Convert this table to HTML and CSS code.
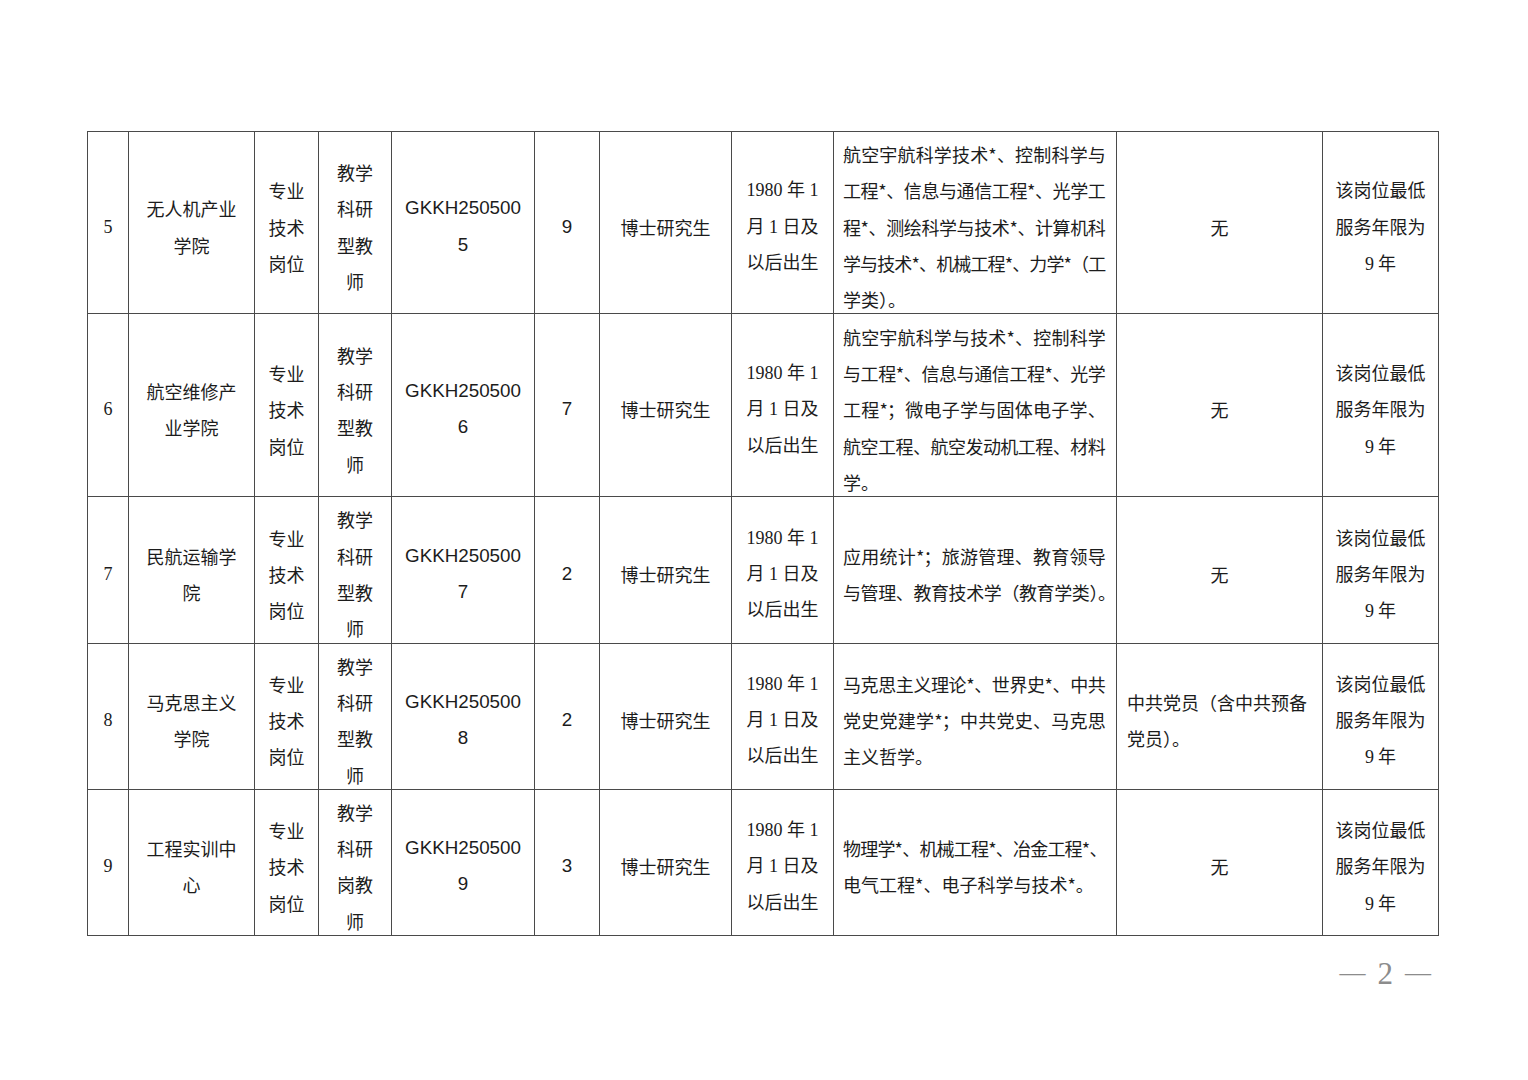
FILE: index.html
```html
<!DOCTYPE html>
<html lang="zh-CN">
<head>
<meta charset="utf-8">
<title>岗位表</title>
<link rel="stylesheet" href="styles.css">
</head>
<body>
<div class="page">
  <table class="grid">
    <colgroup>
      <col class="w1"><col class="w2"><col class="w3"><col class="w4"><col class="w5"><col class="w6"><col class="w7"><col class="w8"><col class="w9"><col class="w10"><col class="w11">
    </colgroup>
    <tr class="r5">
      <td class="serif"><div class="t">5</div></td>
      <td><div class="t"><span class="ln">无人机产业</span><span class="ln">学院</span></div></td>
      <td><div class="t"><span class="ln">专业</span><span class="ln">技术</span><span class="ln">岗位</span></div></td>
      <td><div class="t"><span class="ln">教学</span><span class="ln">科研</span><span class="ln">型教</span><span class="ln">师</span></div></td>
      <td class="arial"><div class="t"><span class="ln">GKKH250500</span><span class="ln">5</span></div></td>
      <td class="arial"><div class="t">9</div></td>
      <td><div class="t">博士研究生</div></td>
      <td class="serif"><div class="t"><span class="ln">1980 年 1</span><span class="ln">月 1 日及</span><span class="ln">以后出生</span></div></td>
      <td class="major"><div class="t"><span class="ln j">航空宇航科学技术*、控制科学与</span><span class="ln j">工程*、信息与通信工程*、光学工</span><span class="ln j">程*、测绘科学与技术*、计算机科</span><span class="ln j tight">学与技术*、机械工程*、力学*（工</span><span class="ln">学类）。</span></div></td>
      <td><div class="t">无</div></td>
      <td><div class="t"><span class="ln">该岗位最低</span><span class="ln">服务年限为</span><span class="ln"><span class="num">9</span> 年</span></div></td>
    </tr>
    <tr class="r6">
      <td class="serif"><div class="t">6</div></td>
      <td><div class="t"><span class="ln">航空维修产</span><span class="ln">业学院</span></div></td>
      <td><div class="t"><span class="ln">专业</span><span class="ln">技术</span><span class="ln">岗位</span></div></td>
      <td><div class="t"><span class="ln">教学</span><span class="ln">科研</span><span class="ln">型教</span><span class="ln">师</span></div></td>
      <td class="arial"><div class="t"><span class="ln">GKKH250500</span><span class="ln">6</span></div></td>
      <td class="arial"><div class="t">7</div></td>
      <td><div class="t">博士研究生</div></td>
      <td class="serif"><div class="t"><span class="ln">1980 年 1</span><span class="ln">月 1 日及</span><span class="ln">以后出生</span></div></td>
      <td class="major"><div class="t"><span class="ln j">航空宇航科学与技术*、控制科学</span><span class="ln j">与工程*、信息与通信工程*、光学</span><span class="ln j">工程*；微电子学与固体电子学、</span><span class="ln j">航空工程、航空发动机工程、材料</span><span class="ln">学。</span></div></td>
      <td><div class="t">无</div></td>
      <td><div class="t"><span class="ln">该岗位最低</span><span class="ln">服务年限为</span><span class="ln"><span class="num">9</span> 年</span></div></td>
    </tr>
    <tr class="r7">
      <td class="serif"><div class="t">7</div></td>
      <td><div class="t"><span class="ln">民航运输学</span><span class="ln">院</span></div></td>
      <td><div class="t"><span class="ln">专业</span><span class="ln">技术</span><span class="ln">岗位</span></div></td>
      <td><div class="t"><span class="ln">教学</span><span class="ln">科研</span><span class="ln">型教</span><span class="ln">师</span></div></td>
      <td class="arial"><div class="t"><span class="ln">GKKH250500</span><span class="ln">7</span></div></td>
      <td class="arial"><div class="t">2</div></td>
      <td><div class="t">博士研究生</div></td>
      <td class="serif"><div class="t"><span class="ln">1980 年 1</span><span class="ln">月 1 日及</span><span class="ln">以后出生</span></div></td>
      <td class="major"><div class="t"><span class="ln j">应用统计*；旅游管理、教育领导</span><span class="ln long">与管理、教育技术学（教育学类）。</span></div></td>
      <td><div class="t">无</div></td>
      <td><div class="t"><span class="ln">该岗位最低</span><span class="ln">服务年限为</span><span class="ln"><span class="num">9</span> 年</span></div></td>
    </tr>
    <tr class="r8">
      <td class="serif"><div class="t">8</div></td>
      <td><div class="t"><span class="ln">马克思主义</span><span class="ln">学院</span></div></td>
      <td><div class="t"><span class="ln">专业</span><span class="ln">技术</span><span class="ln">岗位</span></div></td>
      <td><div class="t"><span class="ln">教学</span><span class="ln">科研</span><span class="ln">型教</span><span class="ln">师</span></div></td>
      <td class="arial"><div class="t"><span class="ln">GKKH250500</span><span class="ln">8</span></div></td>
      <td class="arial"><div class="t">2</div></td>
      <td><div class="t">博士研究生</div></td>
      <td class="serif"><div class="t"><span class="ln">1980 年 1</span><span class="ln">月 1 日及</span><span class="ln">以后出生</span></div></td>
      <td class="major"><div class="t"><span class="ln j">马克思主义理论*、世界史*、中共</span><span class="ln j">党史党建学*；中共党史、马克思</span><span class="ln">主义哲学。</span></div></td>
      <td class="left"><div class="t"><span class="ln">中共党员（含中共预备</span><span class="ln">党员）。</span></div></td>
      <td><div class="t"><span class="ln">该岗位最低</span><span class="ln">服务年限为</span><span class="ln"><span class="num">9</span> 年</span></div></td>
    </tr>
    <tr class="r9">
      <td class="serif"><div class="t">9</div></td>
      <td><div class="t"><span class="ln">工程实训中</span><span class="ln">心</span></div></td>
      <td><div class="t"><span class="ln">专业</span><span class="ln">技术</span><span class="ln">岗位</span></div></td>
      <td><div class="t"><span class="ln">教学</span><span class="ln">科研</span><span class="ln">岗教</span><span class="ln">师</span></div></td>
      <td class="arial"><div class="t"><span class="ln">GKKH250500</span><span class="ln">9</span></div></td>
      <td class="arial"><div class="t">3</div></td>
      <td><div class="t">博士研究生</div></td>
      <td class="serif"><div class="t"><span class="ln">1980 年 1</span><span class="ln">月 1 日及</span><span class="ln">以后出生</span></div></td>
      <td class="major"><div class="t"><span class="ln j">物理学*、机械工程*、冶金工程*、</span><span class="ln">电气工程*、电子科学与技术*。</span></div></td>
      <td><div class="t">无</div></td>
      <td><div class="t"><span class="ln">该岗位最低</span><span class="ln">服务年限为</span><span class="ln"><span class="num">9</span> 年</span></div></td>
    </tr>
  </table>
  <div class="footer">
    <span class="dash">—</span><span class="pgnum">2</span><span class="dash">—</span>
  </div>
</div>
</body>
</html>
```
FILE: styles.css
```css
html, body {
  margin: 0;
  padding: 0;
  background: #ffffff;
}

body {
  font-family: "Noto Sans CJK SC", "Noto Sans", sans-serif;
  color: #1c1c1c;
}

.page {
  padding: 131px 0 0 87px;
  width: 1352px;
}

.grid {
  border-collapse: collapse;
  table-layout: fixed;
  width: 1352px;
  font-size: 18px;
  line-height: 36.3px;
}

.w1 { width: 41px; }
.w2 { width: 126px; }
.w3 { width: 64px; }
.w4 { width: 73px; }
.w5 { width: 143px; }
.w6 { width: 65px; }
.w7 { width: 132px; }
.w8 { width: 102px; }
.w9 { width: 283px; }
.w10 { width: 206px; }
.w11 { width: 116px; }

.grid td {
  border: 1px solid #4a4a4a;
  padding: 0 4px;
  text-align: center;
  vertical-align: middle;
  white-space: nowrap;
}

.r5 { height: 182px; }
.r6 { height: 183px; }
.r7 { height: 146px; }
.r8 { height: 146px; }
.r9 { height: 145px; }

.t {
  padding-top: 4px;
  margin-bottom: -4px;
}

.ln {
  display: block;
}

.serif {
  font-family: "Liberation Serif", "Noto Sans CJK SC", serif;
}

.num {
  font-family: "Liberation Serif", serif;
}

.arial {
  font-family: "Liberation Sans", "Noto Sans CJK SC", sans-serif;
  font-size: 18.8px;
}

.grid td.major {
  text-align: left;
  padding: 0 11px 0 9px;
}

.j {
  text-align: justify;
  text-align-last: justify;
  letter-spacing: -0.8px;
}

.j.tight {
  letter-spacing: -1.2px;
}

.long {
  letter-spacing: -0.4px;
}

.grid td.left {
  text-align: left;
  padding: 0 8px 0 10px;
}

.footer {
  margin-top: 19px;
  text-align: right;
  padding-right: 8px;
  color: #8c8c8c;
  font-family: "Liberation Serif", serif;
  line-height: 36px;
}

.dash {
  font-size: 26px;
  vertical-align: 3px;
}

.pgnum {
  font-size: 31px;
  margin: 0 12px;
}
```
